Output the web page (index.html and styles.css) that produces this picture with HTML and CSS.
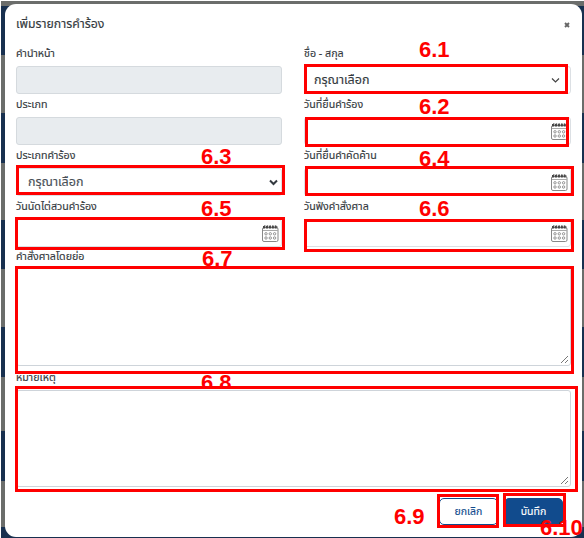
FILE: index.html
```html
<!DOCTYPE html>
<html lang="th">
<head>
<meta charset="utf-8">
<title>เพิ่มรายการคำร้อง</title>
<link rel="stylesheet" href="styles.css">
</head>
<body>
<svg class="defs" width="0" height="0" aria-hidden="true">
  <symbol id="cal" viewBox="0 0 17 17">
    <rect x=".5" y="2.5" width="15.5" height="14" rx="1.5" fill="#fff" stroke="#888"/>
    <path d="M1 5.5h15" stroke="#aaa"/>
    <path d="M1 2.2h14.8" stroke="#444" stroke-width="2.6" stroke-dasharray="2.2 .7"/>
    <path d="M2 .8h13" stroke="#666" stroke-dasharray="1.5 1.2"/>
    <g fill="none" stroke="#888" stroke-width=".9"><circle cx="4" cy="8.8" r="1.2"/><circle cx="8.3" cy="8.8" r="1.2"/><circle cx="12.6" cy="8.8" r="1.2"/><circle cx="4" cy="13" r="1.2"/><circle cx="8.3" cy="13" r="1.2"/><circle cx="12.6" cy="13" r="1.2"/></g>
  </symbol>
  <symbol id="grip" viewBox="0 0 9 9"><path d="M1 8L8 1M5 8L8 5" stroke="#777" fill="none"/></symbol>
</svg>
<div class="page">
  <main class="modal">
    <header class="head"><h1 class="t-title">เพิ่มรายการคำร้อง</h1>
      <svg class="close" viewBox="0 0 6 6"><path d="M1 1l4 4M5 1L1 5" stroke="#666" stroke-width="1.9"/></svg></header>
    <section class="grid">
      <div class="field"><label>คำนำหน้า</label><div class="input off"></div></div>
      <div class="field"><label>ชื่อ - สกุล</label><div class="input"><span class="value dark">กรุณาเลือก</span><svg class="chev" viewBox="0 0 9 7"><path d="M1 1.5l3.5 3.5L8 1.5" fill="none" stroke="#444" stroke-width="1.2"/></svg></div></div>
      <div class="field"><label>ประเภท</label><div class="input off"></div></div>
      <div class="field"><label>วันที่ยื่นคำร้อง</label><div class="input"><svg class="cal"><use href="#cal"/></svg></div></div>
      <div class="field"><label>ประเภทคำร้อง</label><div class="input"><span class="value">กรุณาเลือก</span><svg class="chev bold" viewBox="0 0 9 7"><path d="M1 1.5l3.5 3.5L8 1.5" fill="none" stroke="#343a40" stroke-width="2"/></svg></div></div>
      <div class="field"><label>วันที่ยื่นคำคัดค้าน</label><div class="input"><svg class="cal"><use href="#cal"/></svg></div></div>
      <div class="field"><label>วันนัดไต่สวนคำร้อง</label><div class="input"><svg class="cal"><use href="#cal"/></svg></div></div>
      <div class="field"><label>วันฟังคำสั่งศาล</label><div class="input"><svg class="cal"><use href="#cal"/></svg></div></div>
    </section>
    <div class="area-field"><label>คำสั่งศาลโดยย่อ</label><div class="area"><svg class="grip"><use href="#grip"/></svg></div></div>
    <div class="area-field second"><label>หมายเหตุ</label><div class="area"><svg class="grip"><use href="#grip"/></svg></div></div>
    <footer class="foot"><button class="btn">ยกเลิก</button><button class="btn save">บันทึก</button></footer>
  </main>
</div>
<div class="notes">
  <b class="n n1">6.1</b><b class="n n2">6.2</b><b class="n n3">6.3</b><b class="n n4">6.4</b><b class="n n5">6.5</b><b class="n n6">6.6</b><b class="n n7">6.7</b><b class="n n8">6.8</b><b class="n n9">6.9</b>
  <i class="strip s1"></i><i class="strip s2"></i>
  <i class="box b1"></i><i class="box b2"></i><i class="box b3"></i><i class="box b4"></i><i class="box b5"></i><i class="box b6"></i><i class="box b7"></i><i class="box b8"></i><i class="box b9"></i><i class="box b10"></i>
  <b class="n n10">6.10</b>
</div>
</body>
</html>
```
FILE: styles.css
```css
* { box-sizing: border-box; }
body { margin: 0; width: 584px; height: 538px; overflow: hidden; background: #fff; font-family: "Noto Sans Thai", Kanit, Prompt, "Noto Sans", sans-serif; color: #343a40; }
.defs { position: absolute; }
.page {
  margin: 1px 0 0 1px; padding: 3px 2px 1px 4px; height: 537px;
  background: linear-gradient(#6b6d6b 0 5px, #18304f 5px 54px, #6b6d6b 54px 112px, #18304f 112px 162px, #6b6d6b 162px 219px, #18304f 219px 268px, #6b6d6b 268px 326px, #18304f 326px 376px, #6b6d6b 376px 430px, #18304f 430px 480px, #6b6d6b 480px 526px, #18304f 526px);
}
.modal { height: 533px; padding: 0 11px; border-radius: 11px; background: #fff; -webkit-text-stroke: .15px; }
.head { display: flex; justify-content: space-between; align-items: center; height: 40px; padding: 1px 1px 0 0; }
h1 { margin: 0; font-size: 12.3px; font-weight: 400; line-height: 20px; }
.close { width: 6px; height: 6px; }
.grid { display: grid; grid-template-columns: 266px 267px; column-gap: 22px; grid-template-rows: 51px 51px 51px 50px; }
label { display: block; height: 22px; padding-top: 1px; font-size: 10.7px; line-height: 18px; white-space: nowrap; }
.input { display: flex; align-items: center; justify-content: flex-end; height: 28px; padding: 0 3px 0 9px; border: 1px solid #dce0e4; border-radius: 3px; background: #fff; }
.off { background: #e8ecef; border-color: #d5dade; }
.value { flex: 1; font-size: 12.5px; line-height: 20px; color: #495057; padding: 2px 0 0 2px; }
.dark { padding-left: 0; color: #343a40; }
.chev { width: 9px; height: 7px; margin-right: 7px; }
.chev.bold { margin-right: 0; }
.cal { width: 17px; height: 17px; margin-right: -1px; }
.area-field { height: 121px; width: 555px; }
.area-field label { height: 20px; }
.area { display: flex; justify-content: flex-end; align-items: flex-end; height: 99px; padding: 1px; border: 1px solid #ced4da; border-radius: 3px; }
.second { padding-top: 2px; }
.second label { margin-top: -2px; height: 22px; }
.second .area { height: 97px; }
.grip { width: 9px; height: 9px; }
.foot { display: flex; justify-content: flex-end; gap: 6px; padding: 9px 8px 0 0; }
.btn { width: 59px; height: 27px; padding: 0; border: 1px solid #114b8d; border-radius: 5px; background: #fff; color: #114b8d; font: 400 10.5px/20px "Noto Sans Thai", Kanit, Prompt, "Noto Sans", sans-serif; }
.save { background: #114b8d; color: #fff; }
.notes { position: absolute; inset: 0; overflow: hidden; }
.box { position: absolute; border: 3px solid #f00; }
.b1 { left: 304px; top: 64px; width: 264px; height: 30px; }
.b2 { left: 305px; top: 117px; width: 264px; height: 30px; }
.b3 { left: 16px; top: 165px; width: 269px; height: 30px; }
.b4 { left: 305px; top: 166px; width: 269px; height: 30px; }
.b5 { left: 15px; top: 217px; width: 270px; height: 33px; }
.b6 { left: 304px; top: 219px; width: 270px; height: 33px; }
.b7 { left: 15px; top: 266px; width: 559px; height: 108px; }
.b8 { left: 15px; top: 386px; width: 563px; height: 106px; }
.b9 { left: 437px; top: 494px; width: 62px; height: 34px; }
.b10 { left: 503px; top: 493px; width: 63px; height: 34px; }
.n { position: absolute; font: 700 22px/24px "Liberation Sans", sans-serif; color: #f00; }
.n1 { left: 419px; top: 38px; }
.n2 { left: 419px; top: 95px; }
.n3 { left: 201px; top: 145px; }
.n4 { left: 419px; top: 147px; }
.n5 { left: 201px; top: 197px; }
.n6 { left: 419px; top: 197px; }
.n7 { left: 202px; top: 247px; }
.n8 { left: 201px; top: 371px; }
.n9 { left: 394px; top: 505px; }
.n10 { left: 540px; top: 516px; }
.strip { position: absolute; background: #fff; }
.s1 { left: 18px; top: 368px; width: 550px; height: 5px; }
.s2 { left: 200px; top: 389px; width: 34px; height: 1px; }
```
